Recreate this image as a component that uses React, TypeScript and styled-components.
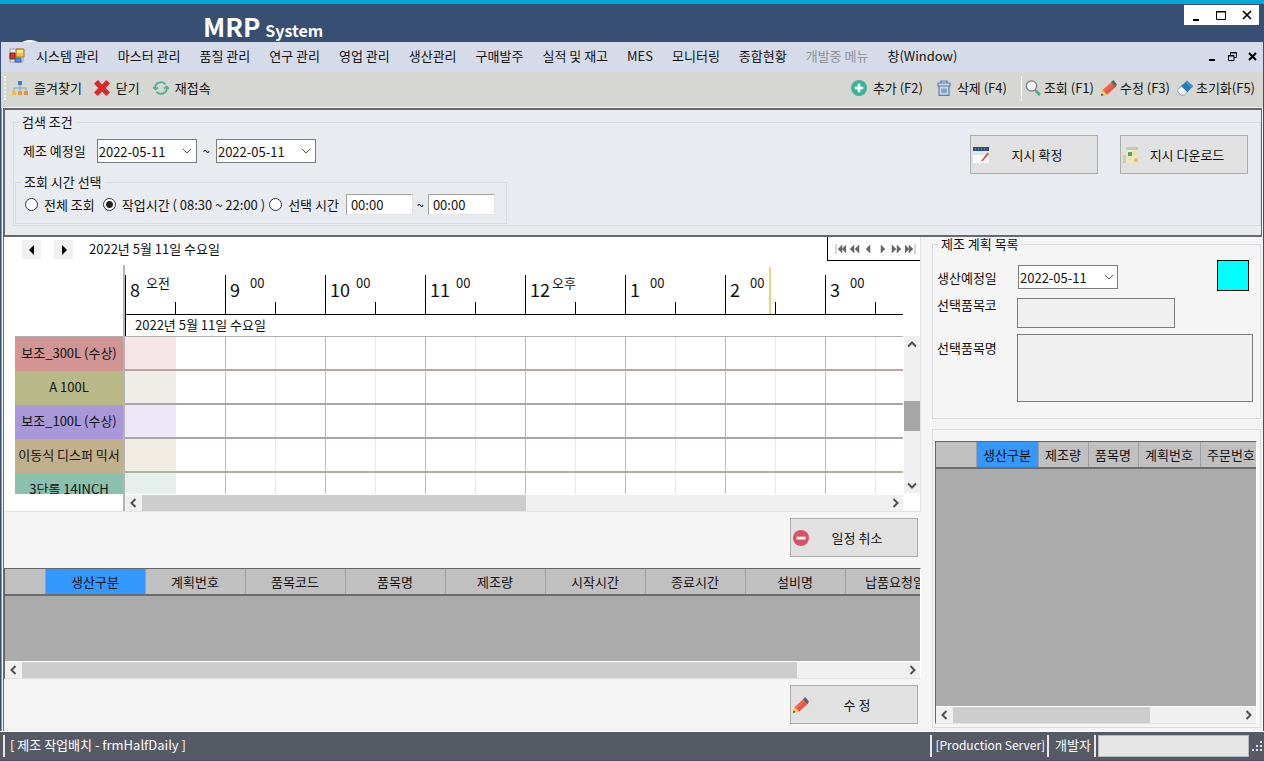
import React from "react";
import styled, { createGlobalStyle } from "styled-components";

const GlobalStyle = createGlobalStyle`
  * { box-sizing: border-box; }
  body {
    margin: 0;
    color: #111;
    font: 13px/18px "Noto Sans CJK KR", "Noto Sans", sans-serif;
  }
  button, input, textarea { font: inherit; color: inherit; }
  button { border: 0; padding: 0; background: none; }
  svg { display: block; flex: none; }
`;

/* ---------- window frame ---------- */

const Window = styled.div`
  display: flex;
  flex-direction: column;
  min-height: 100vh;
  overflow: hidden;
  background: #364f72;
  border-top: 4px solid #00a8dc;
`;

const TitleBar = styled.header`
  display: flex;
  justify-content: space-between;
  align-items: flex-start;
  height: 38px;
  padding: 0 5px 0 22px;
`;

const Brand = styled.div`
  display: flex;
  align-items: baseline;
  gap: 5px;
  align-self: flex-end;
  color: #fff;
  line-height: 24px;
`;

const BrandMark = styled.svg`
  align-self: flex-end;
  margin-right: 160px;
`;

const BrandName = styled.strong`
  font-size: 26px;
  font-weight: 700;
`;

const BrandSuffix = styled.span`
  font-size: 16px;
  font-weight: 700;
`;

const WindowButtons = styled.div`
  display: flex;
  margin-top: 1px;
  background: #fff;
`;

const WindowButton = styled.button`
  display: grid;
  place-items: center;
  width: 25px;
  height: 20px;
`;

const MenuBar = styled.nav`
  display: flex;
  align-items: center;
  gap: 19px;
  height: 30px;
  margin: 0 1px;
  padding: 0 1px 2px 8px;
  background: #d6dbe9;
  white-space: nowrap;
`;

const MenuIcon = styled.svg`
  margin-right: -8px;
`;

const MenuItem = styled.button<{ $muted?: boolean }>`
  color: ${(p) => (p.$muted ? "#8d909a" : "#111")};
`;

const MdiButtons = styled.div`
  display: flex;
  margin-left: auto;
`;

const MdiButton = styled.button`
  display: grid;
  place-items: center;
  width: 20px;
  height: 20px;
`;

const ToolBar = styled.div`
  display: flex;
  align-items: center;
  height: 36px;
  margin: 0 1px;
  padding: 0 8px 3px 3px;
  background: #d6d7d2;
  border-bottom: 1px solid #f4f4f4;
  white-space: nowrap;
`;

const ToolGrip = styled.span`
  width: 3px;
  height: 24px;
  margin-right: 5px;
  border-left: 2px dotted #f8f8f8;
`;

const ToolButton = styled.button<{ $gap?: number; $after?: number }>`
  display: flex;
  align-items: center;
  gap: ${(p) => p.$gap ?? 6}px;
  margin-right: ${(p) => p.$after ?? 12}px;
`;

const ToolSpacer = styled.span`
  flex: 1;
`;

const ToolDivider = styled.span`
  width: 1px;
  height: 25px;
  margin-right: 3px;
  background: #fff;
`;

const Workspace = styled.main`
  display: flex;
  flex-direction: column;
  flex: 1;
  margin: 0 1px;
  padding: 0 1px;
  background: #f5f5f5;
  border-left: 1px solid #8b95a5;
`;

/* ---------- shared controls ---------- */

const GroupBox = styled.fieldset`
  min-width: 0;
  margin: 0;
  padding: 0;
  border: 1px solid #d8dbe0;
`;

const GroupTitle = styled.legend<{ $line?: number }>`
  margin-left: 5px;
  padding: 0 3px;
  line-height: ${(p) => p.$line ?? 18}px;
`;

const PushButton = styled.button`
  display: flex;
  align-items: center;
  width: 128px;
  height: 39px;
  padding: 0 12px 0 2px;
  background: #e1e1e1;
  border: 1px solid #adadad;
`;

const PushLabel = styled.span`
  flex: 1;
  text-align: center;
`;

const DateBox = styled.span`
  display: flex;
  align-items: center;
  width: 100px;
  height: 24px;
  background: #fff;
  border: 1px solid #7a7a7a;
`;

const DateInput = styled.input`
  flex: 1;
  min-width: 0;
  height: 20px;
  padding: 0 0 0 1px;
  border: 0;
  background: transparent;
`;

const DateToggle = styled.button`
  display: grid;
  place-items: center;
  width: 17px;
  height: 22px;
`;

function DateField({ id, label }: { id: string; label?: string }) {
  return (
    <DateBox>
      <DateInput id={id} aria-label={label} defaultValue="2022-05-11" />
      <DateToggle aria-label="달력 열기">
        <svg width="10" height="6" viewBox="0 0 10 6" fill="none" stroke="#555">
          <path d="M.8.8 5 5 9.2.8" />
        </svg>
      </DateToggle>
    </DateBox>
  );
}

/* ---------- scroll bars ---------- */

const ScrollTrack = styled.div<{ $vertical?: boolean }>`
  display: flex;
  flex-direction: ${(p) => (p.$vertical ? "column" : "row")};
  flex: none;
  ${(p) => (p.$vertical ? "width: 16px;" : "height: 17px; border-top: 1px solid #fff;")}
  background: #f0f0f0;
`;

const ScrollArrow = styled.button`
  display: grid;
  place-items: center;
  flex: 0 0 17px;
`;

const ScrollPart = styled.span<{ $size: number; $thumb?: string }>`
  flex: ${(p) => p.$size} 1 0;
  background: ${(p) => p.$thumb ?? "transparent"};
`;

const arrowPaths = {
  left: "M6.5 1 2.5 5l4 4",
  right: "M3.5 1l4 4-4 4",
  up: "M1 6.5l4-4 4 4",
  down: "M1 3.5l4 4 4-4",
};

function Arrow({ to }: { to: keyof typeof arrowPaths }) {
  return (
    <svg width="10" height="10" viewBox="0 0 10 10" fill="none" stroke="#505050" strokeWidth="2">
      <path d={arrowPaths[to]} />
    </svg>
  );
}

type ScrollProps = { vertical?: boolean; before?: number; thumb: number; after: number; color?: string };

function Scroll({ vertical, before = 0, thumb, after, color = "#cdcdcd" }: ScrollProps) {
  return (
    <ScrollTrack $vertical={vertical}>
      <ScrollArrow aria-label="이전">
        <Arrow to={vertical ? "up" : "left"} />
      </ScrollArrow>
      <ScrollPart $size={before} />
      <ScrollPart $size={thumb} $thumb={color} />
      <ScrollPart $size={after} />
      <ScrollArrow aria-label="다음">
        <Arrow to={vertical ? "down" : "right"} />
      </ScrollArrow>
    </ScrollTrack>
  );
}

/* ---------- search panel ---------- */

const SearchPanel = styled.section`
  padding: 3px 0 9px 8px;
  background: #e8ebf0;
  border: 2px solid #68686a;
  border-right-width: 1px;
`;

const SearchBody = styled.div`
  display: flex;
  justify-content: space-between;
  padding: 4px 12px 1px 1px;
`;

const SearchFields = styled.div`
  display: flex;
  flex-direction: column;
  gap: 10px;
`;

const DateRow = styled.div`
  display: flex;
  align-items: center;
  gap: 6px;
  padding: 4px 0 0 8px;
`;

const DateLabel = styled.label`
  margin-right: 5px;
`;

const TimeRow = styled.div`
  display: flex;
  align-items: center;
  width: 490px;
  padding: 3px 0 8px 9px;
`;

const RadioLabel = styled.label<{ $after: number }>`
  display: flex;
  align-items: center;
  gap: 6px;
  margin-right: ${(p) => p.$after}px;
  white-space: nowrap;
`;

const Radio = styled.input`
  appearance: none;
  width: 13px;
  height: 13px;
  margin: 0;
  border: 1px solid #333;
  border-radius: 50%;
  background: #fff;
  &:checked {
    background: radial-gradient(circle, #222 0 3px, #fff 4px);
  }
`;

const TimeInput = styled.input`
  width: 67px;
  height: 21px;
  padding: 0 4px;
  background: #fff;
  border: 1px solid #e3e3e3;
  border-top-color: #a0a0a0;
  border-left-color: #a0a0a0;
`;

const RangeMark = styled.span`
  width: 15px;
  text-align: center;
`;

const SearchButtons = styled.div`
  display: flex;
  gap: 22px;
`;

/* ---------- main columns ---------- */

const Columns = styled.div`
  display: flex;
  flex: 1;
  min-height: 0;
`;

const LeftColumn = styled.div`
  display: flex;
  flex-direction: column;
  flex: 1;
  min-width: 0;
  border-left: 1px solid #707070;
`;

const RightColumn = styled.div`
  display: flex;
  flex-direction: column;
  flex: 0 0 341px;
  flex-basis: 335px;
  min-width: 0;
  padding: 0 1px 3px 5px;
  margin-left: 6px;
  flex-basis: 335px;
`;

/* ---------- scheduler ---------- */

const Scheduler = styled.section`
  padding-left: 1px;
  background: #fff;
  border: 1px solid #e3e3e3;
  border-width: 0 1px 1px 0;
`;

const SchedulerHead = styled.div`
  display: flex;
  align-items: flex-start;
  height: 28px;
  padding-left: 17px;
`;

const StepButton = styled.button`
  display: grid;
  place-items: center;
  width: 19px;
  height: 19px;
  margin: 3px 13px 0 0;
  background: #f0f0f0;
`;

const SchedulerDate = styled.span`
  margin: 3px auto 0 3px;
`;

const Navigator = styled.div`
  display: flex;
  align-items: center;
  gap: 3px;
  height: 24px;
  padding: 0 4px 0 7px;
  border: 1px solid #000;
  border-width: 0 0 1px 1px;
`;

const NavigatorButton = styled.button`
  display: grid;
  place-items: center;
  width: 11px;
  height: 12px;
`;

const SchedulerBody = styled.div`
  display: flex;
  padding-left: 10px;
`;

const Resources = styled.div`
  flex: 0 0 108px;
  padding-top: 71px;
`;

const ResourceList = styled.div`
  height: 158px;
  overflow: hidden;
  border-top: 1px solid #b0b0b0;
`;

const Resource = styled.div<{ $color: string }>`
  height: 34px;
  overflow: hidden;
  background: ${(p) => p.$color};
  line-height: 32px;
  text-align: center;
  white-space: nowrap;
`;

const Timeline = styled.div`
  flex: 1;
  min-width: 0;
  border-left: 2px solid #b4b4b8;
`;

const Hours = styled.div`
  position: relative;
  display: flex;
  align-items: flex-end;
  height: 50px;
  overflow: hidden;
  border-bottom: 1px solid #000;
`;

const Hour = styled.div`
  display: flex;
  flex: 0 0 100px;
  height: 39px;
  padding-left: 4px;
  border-left: 1px solid #000;
  background: linear-gradient(#000, #000) 49px 100% / 1px 12px no-repeat;
`;

const HourNumber = styled.span`
  min-width: 14px;
  font-size: 18px;
  line-height: 28px;
`;

const HourNote = styled.span<{ $near?: boolean }>`
  margin-left: ${(p) => (p.$near ? 2 : 6)}px;
  line-height: 15px;
`;

const NowMarker = styled.span`
  position: absolute;
  left: 644px;
  bottom: 0;
  width: 2px;
  height: 47px;
  background: #e6d57c;
`;

const DayLabel = styled.div`
  height: 21px;
  padding-left: 9px;
  border-left: 1px solid #000;
  line-height: 20px;
`;

const TimeRows = styled.div`
  height: 158px;
  overflow: hidden;
  border-top: 1px solid #b0b0b0;
`;

const TimeLine = styled.div<{ $edge: string; $line: string; $tint: string }>`
  display: flex;
  height: 34px;
  overflow: hidden;
  border-bottom: 2px solid ${(p) => p.$edge};
  & > * {
    border-left: 1px solid ${(p) => p.$line};
  }
  & > :first-child {
    background: linear-gradient(90deg, ${(p) => p.$tint} 50px, #fff 50px);
    border-left-color: ${(p) => p.$tint};
  }
`;

const HourCell = styled.div`
  flex: 0 0 100px;
  background: linear-gradient(#e8e8e8, #e8e8e8) 49px 0 / 1px 100% no-repeat;
`;

const VerticalDock = styled.div`
  display: flex;
  flex: 0 0 17px;
  padding: 71px 0 18px;
  justify-content: center;
`;

const ActionRow = styled.div<{ $bottom: number }>`
  display: flex;
  justify-content: flex-end;
  padding: 6px 3px ${(p) => p.$bottom}px;
`;

/* ---------- data grids ---------- */

const GridBox = styled.div`
  display: flex;
  flex-direction: column;
  flex: 1;
  min-width: 0;
  min-height: 100px;
  background: #ababab;
  border: 1px solid #646464;
  border-right-color: #fff;
  border-bottom-color: #e3e3e3;
`;

const GridView = styled.div`
  flex: 1;
  overflow: hidden;
`;

const GridTable = styled.table<{ $width: number }>`
  width: ${(p) => p.$width}px;
  table-layout: fixed;
  border-collapse: collapse;
`;

const GridHead = styled.th<{ $width: number; $selected?: boolean }>`
  width: ${(p) => p.$width}px;
  height: 26px;
  padding: 0;
  overflow: hidden;
  background: ${(p) => (p.$selected ? "#3399ff" : "#c0c0c0")};
  border-right: 1px solid #a0a0a0;
  border-bottom: 2px solid #6c6c6c;
  font-weight: 400;
  white-space: nowrap;
`;

type Column = { name: string; width: number };

function DataGrid({ columns, thumb, after }: { columns: Column[]; thumb: number; after: number }) {
  const total = columns.reduce((sum, c) => sum + c.width, 40);
  return (
    <GridBox>
      <GridView>
        <GridTable $width={total}>
          <thead>
            <tr>
              <GridHead $width={40} />
              {columns.map((c, i) => (
                <GridHead key={c.name} scope="col" $width={c.width} $selected={i === 0}>
                  {c.name}
                </GridHead>
              ))}
            </tr>
          </thead>
        </GridTable>
      </GridView>
      <Scroll thumb={thumb} after={after} />
    </GridBox>
  );
}

/* ---------- plan panel ---------- */

const PlanForm = styled.div`
  display: grid;
  grid-template-columns: 80px 1fr;
  padding: 9px 7px 16px 4px;
`;

const PlanLabel = styled.label<{ $top: number }>`
  padding-top: ${(p) => p.$top}px;
`;

const PlanDate = styled.div`
  display: flex;
  justify-content: space-between;
  height: 36px;
  padding: 5px 4px 0 1px;
`;

const ColorSwatch = styled.button`
  width: 32px;
  height: 31px;
  margin-top: -5px;
  background: #00ffff;
  border: 1px solid #000;
`;

const ReadOnlyInput = styled.input`
  width: 158px;
  height: 30px;
  margin: 2px 0 6px;
  background: #f0f0f0;
  border: 1px solid #7a7a7a;
`;

const ReadOnlyArea = styled.textarea`
  display: block;
  width: 100%;
  height: 68px;
  background: #f0f0f0;
  border: 1px solid #7a7a7a;
  resize: none;
`;

const ListBox = styled.section`
  display: flex;
  flex: 1;
  margin-top: 10px;
  padding: 11px 3px 3px 2px;
  border: 1px solid #dcdcdc;
`;

/* ---------- status bar ---------- */

const StatusBar = styled.footer`
  display: flex;
  align-items: center;
  height: 30px;
  padding: 0 1px 1px 3px;
  background: #565a65;
  border-top: 1px solid #fff;
  border-bottom: 1px solid #3c5479;
  color: #fff;
  white-space: nowrap;
`;

const StatusCell = styled.span<{ $left?: number; $right?: number; $grow?: boolean; $small?: boolean }>`
  flex: ${(p) => (p.$grow ? 1 : "none")};
  height: 22px;
  padding: 1px ${(p) => p.$right ?? 0}px 0 ${(p) => p.$left ?? 0}px;
  border-left: 2px solid #e8e8ea;
  font-size: ${(p) => (p.$small ? 12 : 13)}px;
`;

const StatusWell = styled.span`
  width: 151px;
  height: 22px;
  margin: 0 2px 0 2px;
  background: #e6e6e6;
  border: 1px solid #b8b8b8;
`;

/* ---------- icons ---------- */

const icon = { width: 16, height: 16, viewBox: "0 0 16 16", "aria-hidden": true } as const;

const FormIcon = () => (
  <MenuIcon {...icon}>
    <path d="M1 1h13v13H1z" fill="#eceef4" stroke="#9aa0b0" />
    <path d="M7 1h8v8H7z" fill="#f3c53c" stroke="#a8761a" />
    <path d="M8 2h6v3H8z" fill="#fbe391" />
    <path d="M1 5h5v6H1z" fill="#c83a32" stroke="#7d1712" />
    <path d="M6 10h6v4H6z" fill="#4f91e0" stroke="#2a5ea8" />
  </MenuIcon>
);

const TreeIcon = () => (
  <svg {...icon}>
    <path d="M8 5v3M2 12V8h12v4M8 8v4" fill="none" stroke="#8ea3b0" />
    <path d="M6 1h4v4H6z" fill="#2a83c8" />
    <path d="M0 11h4v4H0z" fill="#f2c230" />
    <path d="M6 11h4v4H6z" fill="#f09a35" />
    <path d="M12 11h4v4h-4z" fill="#e88a4a" />
  </svg>
);

const CloseIcon = () => (
  <svg {...icon}>
    <path d="M4 0l4 4.5L12.2 0 16 3.5 11.8 8l4.2 4.5-3.8 3.5L8 11.6 3.8 16 0 12.5 4.3 8 0 3.8z" fill="#d92a2a" />
  </svg>
);

const RefreshIcon = () => (
  <svg {...icon} fill="none" stroke="#4fae94" strokeWidth="1.8">
    <path d="M2.2 8.5A5.8 5.8 0 0 1 12.5 4.4M13.8 7.5A5.8 5.8 0 0 1 3.5 11.6" />
    <path d="M0 7l2.2 2.4L5 7.4M16 9l-2.2-2.4L11 8.6" />
  </svg>
);

const AddIcon = () => (
  <svg {...icon}>
    <circle cx="8" cy="8" r="8" fill="#3db39e" />
    <path d="M8 3.8v8.4M3.8 8h8.4" stroke="#fff" strokeWidth="2.6" />
  </svg>
);

const TrashIcon = () => (
  <svg {...icon} fill="none" stroke="#5a7fa8" strokeWidth="1.2">
    <path d="M5 3V1h6v2M2 3h12v3H2zM3 6v9.4h10V6" fill="#c8d7e6" />
    <path d="M6 8.5V13M8 8.5V13M10 8.5V13" />
  </svg>
);

const SearchIcon = () => (
  <svg {...icon}>
    <circle cx="6.5" cy="6" r="5.2" fill="#f4f6f6" stroke="#70787e" strokeWidth="1.2" />
    <path d="M10 10l1.5 1.3" stroke="#777" strokeWidth="1.4" />
    <path d="M11.2 11l3.8 4" stroke="#43b08c" strokeWidth="2.6" />
  </svg>
);

const PencilIcon = () => (
  <svg {...icon}>
    <path d="M0 16l1.5-6L11 1.5 15.5 6 6 14.5z" fill="#f0674f" />
    <path d="M3.5 12L13 3.5l2.5 2.5L6 14.5z" fill="#e8583f" />
    <path d="M0 16l1.5-6 4.5 4.5z" fill="#f9c95b" />
    <path d="M0 16l.7-2.4L2.5 15z" fill="#444" />
    <path d="M10 2.3L12.2 0 16 4.5 14.2 7z" fill="#59636d" />
  </svg>
);

const EraserIcon = () => (
  <svg {...icon}>
    <path d="M0 10.5l4.6-5 6 6-3.2 3.7H4z" fill="#f2f6f8" stroke="#6c8da6" strokeWidth=".8" />
    <path d="M4 6l6-5.2L16 6l-5.6 6.2z" fill="#2379b9" />
    <path d="M10 .8L16 6l-1.8 2L8.2 2.4z" fill="#3c93cf" />
  </svg>
);

const PlanIcon = () => (
  <svg {...icon}>
    <path d="M0 0h16v16H0z" fill="#fafafa" />
    <path d="M0 0h16v4H0z" fill="#31506f" />
    <path d="M2 2h1M5 2h1M8 2h1M11 2h1" stroke="#91a9be" />
    <path d="M0 4h16v4H0z" fill="#dfe8ea" />
    <path d="M8 14l6.5-8.5L16 7l-6 7z" fill="#d9534a" />
  </svg>
);

const DownloadIcon = () => (
  <svg {...icon}>
    <path d="M0 8h4v8H0z" fill="#c8cdb9" />
    <path d="M3 1h12v15H3z" fill="#eee9c0" />
    <path d="M3 0h12v3H3z" fill="#c7c6b7" />
    <path d="M5 5h4v4H5z" fill="#4aa76c" />
    <path d="M11 11h4v4h-4z" fill="#efbd6a" />
    <path d="M10 5h4M10 7h4M5 12h4" stroke="#dcd7a8" />
  </svg>
);

const CancelIcon = () => (
  <svg {...icon}>
    <circle cx="8" cy="8" r="8" fill="#d75266" />
    <path d="M3.5 6.7h9v2.8h-9z" fill="#fff" />
  </svg>
);

const navPaths = [
  "M1 1v10M7 2L3 6l4 4zM11 2L7 6l4 4z",
  "M5 2L1 6l4 4zM10 2L6 6l4 4z",
  "M7 2L3 6l4 4z",
  "M4 2l4 4-4 4z",
  "M1 2l4 4-4 4zM6 2l4 4-4 4z",
  "M0 2l4 4-4 4zM4 2l4 4-4 4zM10 1v10",
];
const navNames = ["처음", "이전 주", "이전", "다음", "다음 주", "마지막"];

/* ---------- data ---------- */

const menus = [
  "시스템 관리", "마스터 관리", "품질 관리", "연구 관리", "영업 관리", "생산관리", "구매발주",
  "실적 및 재고", "MES", "모니터링", "종합현황", "개발중 메뉴", "창(Window)",
];

const hours = [
  ["8", "오전"], ["9", "00"], ["10", "00"], ["11", "00"],
  ["12", "오후"], ["1", "00"], ["2", "00"], ["3", "00"],
];

const resources = [
  { name: "보조_300L (수상)", color: "#d39494", tint: "#f5e7e8", line: "#c8b0b4", edge: "#bda6a0" },
  { name: "A 100L", color: "#b9b987", tint: "#efeee6", line: "#c4c3a4", edge: "#aba6a6" },
  { name: "보조_100L (수상)", color: "#a998d8", tint: "#ebe7f6", line: "#b6b0c4", edge: "#aea4ac" },
  { name: "이동식 디스퍼 믹서", color: "#c0b08b", tint: "#f0ece4", line: "#c5bda4", edge: "#a8b59c" },
  { name: "3단롤 14INCH", color: "#8cc0ae", tint: "#e6efec", line: "#a6c8bc", edge: "#9fbdb0" },
];

const workColumns: Column[] = [
  "생산구분", "계획번호", "품목코드", "품목명", "제조량", "시작시간", "종료시간", "설비명", "납품요청일",
].map((name) => ({ name, width: 100 }));

const planColumns: Column[] = [
  { name: "생산구분", width: 62 },
  { name: "제조량", width: 50 },
  { name: "품목명", width: 50 },
  { name: "계획번호", width: 62 },
  { name: "주문번호", width: 62 },
];

export default function App() {
  return (
    <Window>
      <GlobalStyle />
      <TitleBar>
        <Brand>
          <BrandMark width="16" height="2" viewBox="0 0 16 2" aria-hidden="true">
            <path d="M0 2Q8-2 16 2z" fill="#fff" />
          </BrandMark>
          <BrandName>MRP</BrandName>
          <BrandSuffix>System</BrandSuffix>
        </Brand>
        <WindowButtons>
          <WindowButton aria-label="최소화">
            <svg width="11" height="11" viewBox="0 0 11 11"><path d="M2 9h6v2H2z" /></svg>
          </WindowButton>
          <WindowButton aria-label="최대화">
            <svg width="11" height="11" viewBox="0 0 11 11"><path d="M.5 2h9v7.5h-9zM0 1.5h10" fill="none" stroke="#000" /></svg>
          </WindowButton>
          <WindowButton aria-label="닫기">
            <svg width="10" height="10" viewBox="0 0 10 10"><path d="M1 1l8 8M9 1L1 9" stroke="#000" strokeWidth="1.7" /></svg>
          </WindowButton>
        </WindowButtons>
      </TitleBar>

      <MenuBar>
        <FormIcon />
        {menus.map((name) => (
          <MenuItem key={name} $muted={name === "개발중 메뉴"}>{name}</MenuItem>
        ))}
        <MdiButtons>
          <MdiButton aria-label="창 최소화">
            <svg width="9" height="9" viewBox="0 0 9 9"><path d="M1 7h6v2H1z" /></svg>
          </MdiButton>
          <MdiButton aria-label="창 복원">
            <svg width="9" height="9" viewBox="0 0 9 9"><path d="M2.5 3V.5h6v5H6M2 1h7M.5 3.5H6v5H.5zM0 4h6" fill="none" stroke="#000" /></svg>
          </MdiButton>
          <MdiButton aria-label="창 닫기">
            <svg width="9" height="9" viewBox="0 0 9 9"><path d="M1 1l7 7M8 1L1 8" stroke="#000" strokeWidth="2" /></svg>
          </MdiButton>
        </MdiButtons>
      </MenuBar>

      <ToolBar>
        <ToolGrip />
        <ToolButton><TreeIcon />즐겨찾기</ToolButton>
        <ToolButton $after={13}><CloseIcon />닫기</ToolButton>
        <ToolButton><RefreshIcon />재접속</ToolButton>
        <ToolSpacer />
        <ToolButton $after={13}><AddIcon />추가 (F2)</ToolButton>
        <ToolButton $gap={5} $after={14}><TrashIcon />삭제 (F4)</ToolButton>
        <ToolDivider />
        <ToolButton $gap={3} $after={7}><SearchIcon />조회 (F1)</ToolButton>
        <ToolButton $gap={3} $after={7}><PencilIcon />수정 (F3)</ToolButton>
        <ToolButton $gap={3} $after={0}><EraserIcon />초기화(F5)</ToolButton>
      </ToolBar>

      <Workspace>
        <SearchPanel>
          <GroupBox>
            <GroupTitle>검색 조건</GroupTitle>
            <SearchBody>
              <SearchFields>
                <DateRow>
                  <DateLabel htmlFor="date-from">제조 예정일</DateLabel>
                  <DateField id="date-from" />
                  <span>~</span>
                  <DateField id="date-to" label="종료일" />
                </DateRow>
                <GroupBox>
                  <GroupTitle>조회 시간 선택</GroupTitle>
                  <TimeRow>
                    <RadioLabel $after={8}><Radio type="radio" name="range" />전체 조회</RadioLabel>
                    <RadioLabel $after={4}><Radio type="radio" name="range" defaultChecked />작업시간 ( 08:30 ~ 22:00 )</RadioLabel>
                    <RadioLabel $after={7}><Radio type="radio" name="range" />선택 시간</RadioLabel>
                    <TimeInput aria-label="시작 시간" defaultValue="00:00" />
                    <RangeMark>~</RangeMark>
                    <TimeInput aria-label="종료 시간" defaultValue="00:00" />
                  </TimeRow>
                </GroupBox>
              </SearchFields>
              <SearchButtons>
                <PushButton><PlanIcon /><PushLabel>지시 확정</PushLabel></PushButton>
                <PushButton><DownloadIcon /><PushLabel>지시 다운로드</PushLabel></PushButton>
              </SearchButtons>
            </SearchBody>
          </GroupBox>
        </SearchPanel>

        <Columns>
          <LeftColumn>
            <Scheduler>
              <SchedulerHead>
                <StepButton aria-label="이전 날짜">
                  <svg width="8" height="10" viewBox="0 0 8 10"><path d="M6 0v10L1 5z" /></svg>
                </StepButton>
                <StepButton aria-label="다음 날짜">
                  <svg width="8" height="10" viewBox="0 0 8 10"><path d="M2 0v10l5-5z" /></svg>
                </StepButton>
                <SchedulerDate>2022년 5월 11일 수요일</SchedulerDate>
                <Navigator>
                  {navPaths.map((d, i) => (
                    <NavigatorButton key={d} aria-label={navNames[i]}>
                      <svg width="11" height="12" viewBox="0 0 11 12"><path d={d} fill="#666" stroke="#777" strokeWidth=".6" /></svg>
                    </NavigatorButton>
                  ))}
                </Navigator>
              </SchedulerHead>
              <SchedulerBody>
                <Resources>
                  <ResourceList>
                    {resources.map((r) => <Resource key={r.name} $color={r.color}>{r.name}</Resource>)}
                  </ResourceList>
                </Resources>
                <Timeline>
                  <Hours>
                    {hours.map(([hour, note]) => (
                      <Hour key={hour}>
                        <HourNumber>{hour}</HourNumber>
                        <HourNote $near={note !== "00"}>{note}</HourNote>
                      </Hour>
                    ))}
                    <NowMarker />
                  </Hours>
                  <DayLabel>2022년 5월 11일 수요일</DayLabel>
                  <TimeRows>
                    {resources.map((r) => (
                      <TimeLine key={r.name} $edge={r.edge} $line={r.line} $tint={r.tint}>
                        {hours.map(([hour]) => <HourCell key={hour} />)}
                      </TimeLine>
                    ))}
                  </TimeRows>
                  <Scroll thumb={385} after={360} />
                </Timeline>
                <VerticalDock>
                  <Scroll vertical before={48} thumb={31} after={45} color="#a6a6a6" />
                </VerticalDock>
              </SchedulerBody>
            </Scheduler>
            <ActionRow $bottom={11}>
              <PushButton><CancelIcon /><PushLabel>일정 취소</PushLabel></PushButton>
            </ActionRow>
            <DataGrid columns={workColumns} thumb={775} after={106} />
            <ActionRow $bottom={7}>
              <PushButton><PencilIcon /><PushLabel>수 정</PushLabel></PushButton>
            </ActionRow>
          </LeftColumn>

          <RightColumn>
            <GroupBox>
              <GroupTitle $line={14}>제조 계획 목록</GroupTitle>
              <PlanForm>
                <PlanLabel $top={9} htmlFor="plan-date">생산예정일</PlanLabel>
                <PlanDate>
                  <DateField id="plan-date" />
                  <ColorSwatch aria-label="색상 선택" />
                </PlanDate>
                <PlanLabel $top={0} htmlFor="item-code">선택품목코</PlanLabel>
                <ReadOnlyInput id="item-code" readOnly />
                <PlanLabel $top={5} htmlFor="item-name">선택품목명</PlanLabel>
                <ReadOnlyArea id="item-name" readOnly />
              </PlanForm>
            </GroupBox>
            <ListBox>
              <DataGrid columns={planColumns} thumb={197} after={89} />
            </ListBox>
          </RightColumn>
        </Columns>
      </Workspace>

      <StatusBar>
        <StatusCell $left={5} $grow>[ 제조 작업배치 - frmHalfDaily ]</StatusCell>
        <StatusCell $left={3} $right={2} $small>[Production Server]</StatusCell>
        <StatusCell $left={6} $right={3}>개발자</StatusCell>
        <StatusCell />
        <StatusWell />
        <svg width="12" height="12" viewBox="0 0 12 12" fill="#dfe1e6" aria-hidden="true">
          <path d="M9 1h2v2H9zM5 5h2v2H5zM9 5h2v2H9zM1 9h2v2H1zM5 9h2v2H5zM9 9h2v2H9z" />
        </svg>
      </StatusBar>
    </Window>
  );
}
